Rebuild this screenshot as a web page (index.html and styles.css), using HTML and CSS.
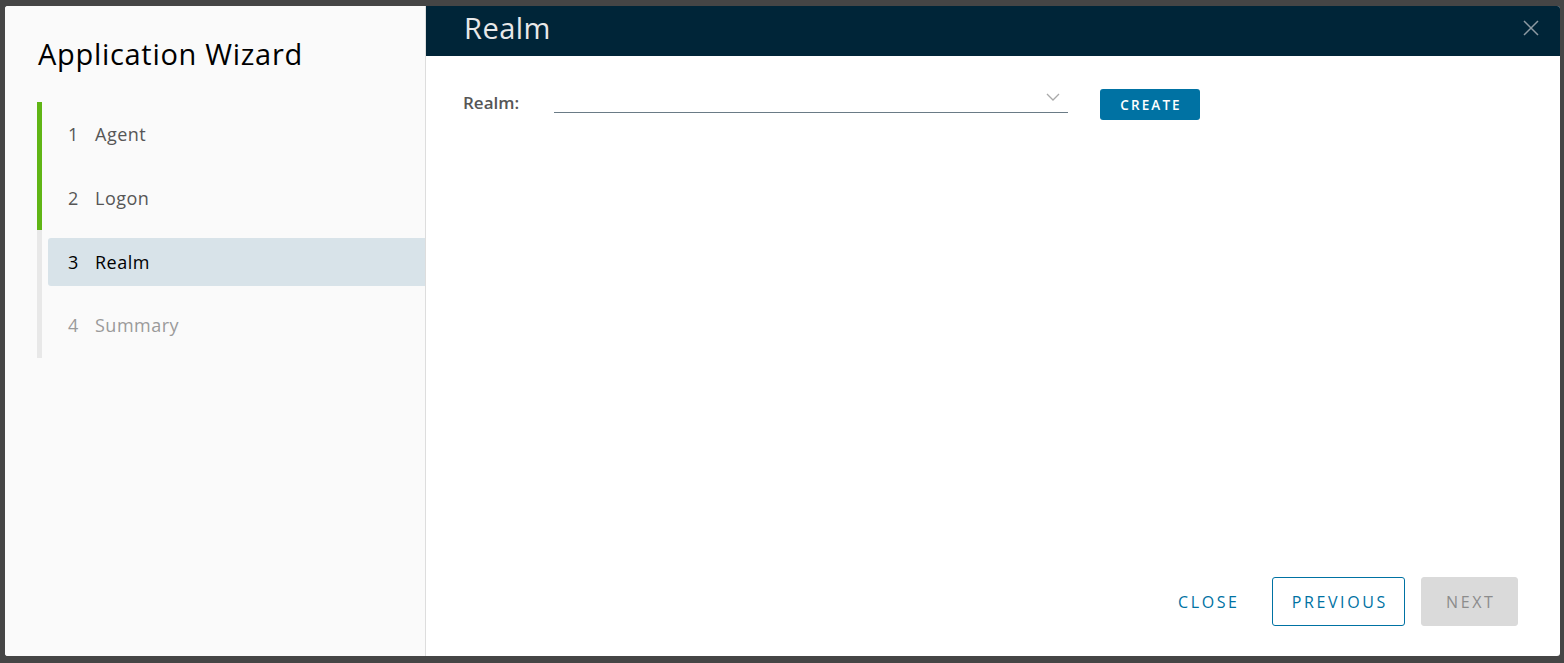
FILE: index.html
```html
<!DOCTYPE html>
<html lang="en">
<head>
<meta charset="utf-8">
<title>Application Wizard</title>
<link rel="stylesheet" href="styles.css">
</head>
<body>
<div class="backdrop">
  <div class="modal">
    <aside class="sidebar">
      <h1 class="wizard-title">Application Wizard</h1>
      <ol class="steps">
        <li class="step done"><span class="num">1</span><span class="label">Agent</span></li>
        <li class="step done"><span class="num">2</span><span class="label">Logon</span></li>
        <li class="step current"><div class="step-link"><span class="num">3</span><span class="label">Realm</span></div></li>
        <li class="step todo"><span class="num">4</span><span class="label">Summary</span></li>
      </ol>
    </aside>
    <section class="main">
      <header class="main-header">
        <h2 class="page-title">Realm</h2>
        <button class="close-x" aria-label="Close">
          <svg width="16" height="16" viewBox="0 0 16 16"><path d="M1 1 L15 15 M15 1 L1 15" stroke="#8d9aa2" stroke-width="1.5" fill="none"/></svg>
        </button>
      </header>
      <div class="main-body">
        <div class="form-row">
          <label class="form-label">Realm:</label>
          <div class="select">
            <svg class="chev" width="14" height="8" viewBox="0 0 14 8"><path d="M1 1 L7 7 L13 1" stroke="#a9a9a9" stroke-width="1.3" fill="none"/></svg>
          </div>
          <button class="btn-create">CREATE</button>
        </div>
      </div>
      <footer class="main-footer">
        <button class="btn btn-flat">CLOSE</button>
        <button class="btn btn-outline">PREVIOUS</button>
        <button class="btn btn-disabled">NEXT</button>
      </footer>
    </section>
  </div>
</div>
</body>
</html>
```
FILE: styles.css
```css
* { box-sizing: border-box; }
html, body { margin: 0; padding: 0; }
body {
  width: 1564px;
  height: 663px;
  background: #454545;
  font-family: "Open Sans", "Lato", sans-serif;
  overflow: hidden;
}
.backdrop {
  padding: 6px 4px 7px 5px;
}
.modal {
  width: 1555px;
  height: 650px;
  display: flex;
  border-radius: 3px;
  overflow: hidden;
  background: #fff;
}
.sidebar {
  width: 421px;
  flex: none;
  background: #fafafa;
  border-right: 1px solid #dddddd;
  padding: 30px 0 0 32px;
}
.wizard-title {
  margin: 0 0 0 1px;
  font-weight: 400;
  font-size: 29px;
  line-height: 36px;
  letter-spacing: 0.7px;
  color: #000;
}
.steps {
  list-style: none;
  margin: 30px 0 0 0;
  padding: 0;
}
.step {
  height: 64px;
  display: flex;
  align-items: center;
  border-left: 5px solid #e8e8e8;
  padding-left: 26px;
  font-size: 18px;
  letter-spacing: 0.5px;
  color: #565656;
}
.step.done { border-left-color: #60b515; }
.step.done + .step.done { padding-bottom: 1px; }
.step.todo { color: #9a9a9a; padding-bottom: 3px; }
.step.current { padding: 8px 0 8px 6px; }
.step-link {
  flex: 1;
  height: 48px;
  display: flex;
  align-items: center;
  padding-left: 20px;
  background: #d8e3e9;
  border-radius: 3px 0 0 3px;
  color: #000;
}
.num { display: inline-block; width: 27px; }

.main {
  flex: 1;
  display: flex;
  flex-direction: column;
}
.main-header {
  height: 50px;
  background: #002538;
  display: flex;
  align-items: center;
  justify-content: space-between;
  padding: 0 21px 0 38px;
}
.page-title {
  margin: 0;
  font-weight: 400;
  font-size: 29px;
  letter-spacing: 0.5px;
  color: #e8e8e8;
  line-height: 36px;
  position: relative;
  top: -3px;
}
.close-x {
  background: none;
  border: 0;
  padding: 0;
  width: 16px;
  height: 16px;
  display: flex;
  position: relative;
  top: -3px;
}
.main-body {
  flex: 1;
  padding: 34px 0 0 37px;
}
.form-row {
  display: flex;
  align-items: flex-start;
}
.form-label {
  width: 91px;
  font-size: 17px;
  font-weight: 600;
  color: #565656;
  line-height: 22px;
  padding-top: 2px;
}
.select {
  width: 514px;
  height: 23px;
  border-bottom: 1px solid #6a7b86;
  position: relative;
}
.chev {
  position: absolute;
  right: 8px;
  top: 3px;
}
.btn-create {
  margin: 0 0 0 32px;
  width: 100px;
  height: 31px;
  padding: 0;
  background: #0072a3;
  color: #fff;
  border: 0;
  border-radius: 3px;
  font-family: inherit;
  font-weight: 600;
  font-size: 13.5px;
  letter-spacing: 2.1px;
  text-indent: 2.1px;
  position: relative;
  top: -1px;
}
.main-footer {
  display: flex;
  justify-content: flex-end;
  align-items: center;
  padding: 0 42px 30px 0;
  gap: 16px;
}
.btn {
  height: 49px;
  border-radius: 3px;
  font-family: inherit;
  font-size: 16px;
  letter-spacing: 2.6px;
  text-indent: 2.6px;
  font-weight: 500;
  padding: 0;
  background: none;
}
.btn-flat {
  width: 97px;
  border: 1px solid transparent;
  color: #0072a3;
}
.btn-outline {
  width: 133px;
  border: 1px solid #0072a3;
  color: #0072a3;
}
.btn-disabled {
  width: 97px;
  border: 1px solid #dadada;
  background: #dadada;
  color: #8c8c8c;
}
```
